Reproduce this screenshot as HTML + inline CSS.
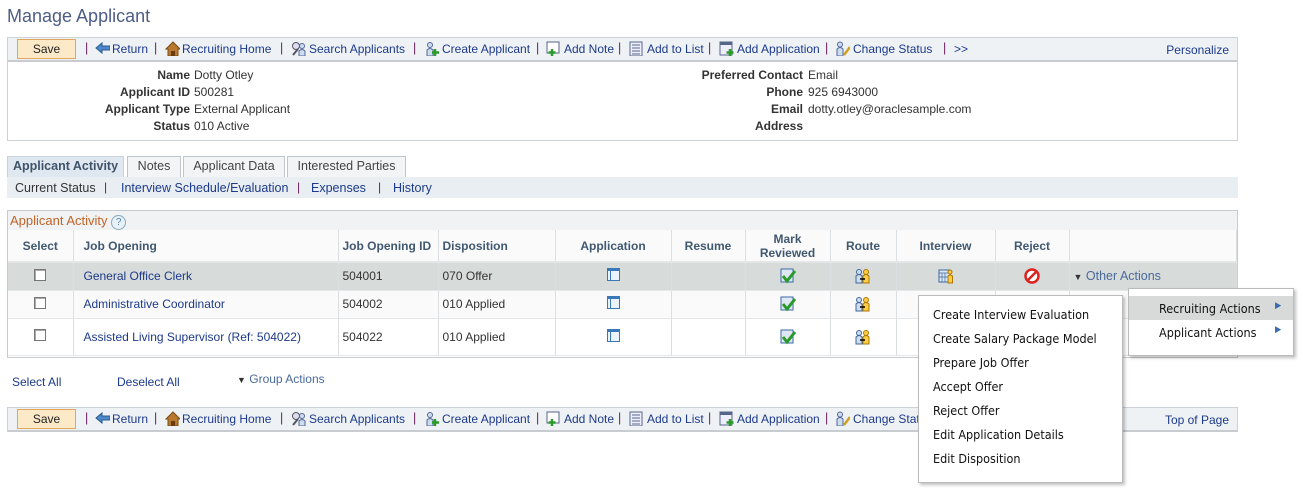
<!DOCTYPE html>
<html><head><meta charset="utf-8"><style>
*{box-sizing:border-box;margin:0;padding:0}
body{width:1303px;height:491px;background:#fff;font-family:"Liberation Sans",Arial,sans-serif;font-size:12px;color:#333;position:relative;overflow:hidden}
.a{position:absolute;white-space:nowrap}
.lnk{color:#1d3a8a}
.tb{position:absolute;left:7px;width:1231px;height:25px;background:#eef2f5;border:1px solid #ccd2d8;border-bottom:2px solid #c8ccd0}
.save{position:absolute;left:9px;top:1px;width:59px;height:20px;background:#fce9c8;border:1px solid #e3a45c;text-align:center;line-height:18px;color:#222}
.t{position:absolute;top:4px;font-size:12px;color:#1d3a8a;white-space:nowrap}
.s{position:absolute;top:3px;color:#6a2060;font-size:12.5px}
.ic{position:absolute;top:3px;width:15px;height:15px}
.lbl{position:absolute;font-weight:bold;text-align:right;color:#333}
.val{position:absolute;color:#333}
.tab{position:absolute;top:156px;height:21px;border:1px solid #bcc6cf;border-bottom:none;background:#f3f4f5;text-align:center;line-height:19px;color:#444;font-size:12.5px;white-space:nowrap}
.grid{position:absolute;left:7px;top:210px;width:1231px;height:148px;border:1px solid #c6cbcf}
table{position:absolute;left:0;top:19px;border-collapse:collapse;width:1229px;table-layout:fixed}
td,th{border-right:1px solid #dcdfe1;font-size:12px;white-space:nowrap}
th{height:32px;background:#fafafa;color:#405870;font-weight:bold;border-bottom:2px solid #e3e5e6}
td{color:#333;border-bottom:1px solid #e4e6e7}
.cb{display:inline-block;width:12px;height:12px;border:1px solid #777;background:#fff;box-shadow:inset 1px 1px 0 #aaa}
.app{display:inline-block;width:13px;height:13px;border:1px solid #3a78b8;border-top:3px solid #3a78b8;background:#eaf3fb;position:relative}
.app:after{content:"";position:absolute;left:2px;top:0;width:1px;height:9px;background:#3a78b8}
.menu{position:absolute;background:#fff;border:1px solid #bbb;box-shadow:2px 2px 3px rgba(0,0,0,.25);font-family:"DejaVu Sans Condensed","Liberation Sans",sans-serif;font-size:12.5px;color:#111}
.mi{position:absolute;left:14px;white-space:nowrap}
svg{display:inline-block;vertical-align:middle}
</style></head><body>
<div class="a" style="left:7px;top:6px;font-size:18px;color:#4d5d85">Manage Applicant</div>

<svg width="0" height="0" style="position:absolute"><defs>
<g id="ret"><path d="M1 7 L7 2 L7 5 L15 5 L15 9 L7 9 L7 12 Z" fill="#4d88c8" stroke="#2a5a98"/></g>
<g id="home"><path d="M1 8 L8 1 L15 8 L13 8 L13 15 L3 15 L3 8 Z" fill="#b8782e" stroke="#7a4a18"/><rect x="6" y="10" width="4" height="5" fill="#6a3a10"/></g>
<g id="srch"><circle cx="5" cy="5" r="3.5" fill="#dde" stroke="#556"/><path d="M7 8 L2 14" stroke="#556" stroke-width="2"/><circle cx="11" cy="5" r="2.5" fill="#cde" stroke="#569"/><path d="M8 15 L8 10 Q11 7 14 10 L14 15Z" fill="#cde" stroke="#569"/></g>
<g id="cre"><circle cx="6" cy="4" r="2.5" fill="#cde" stroke="#569"/><path d="M3 15 L3 9 Q6 6 9 9 L9 15Z" fill="#cde" stroke="#569"/><path d="M11 8 V15 M8 11.5 H15" stroke="#2a9a2a" stroke-width="2.5"/></g>
<g id="note"><rect x="1" y="1" width="12" height="11" fill="#fff" stroke="#568"/><path d="M6 8 V15 M2.5 11.5 H9.5" stroke="#2a9a2a" stroke-width="2.5"/></g>
<g id="list"><rect x="1" y="1" width="12" height="14" fill="#eef" stroke="#568"/><path d="M3 4H11M3 7H11M3 10H11M3 13H11" stroke="#568"/></g>
<g id="appl"><rect x="1" y="1" width="12" height="13" fill="#eef" stroke="#568"/><rect x="1" y="1" width="12" height="3" fill="#568"/><path d="M11 8 V15 M7.5 11.5 H14.5" stroke="#2a9a2a" stroke-width="2.5"/></g>
<g id="chg"><circle cx="5" cy="3.5" r="2.5" fill="#cde" stroke="#569"/><path d="M2 15 L2 8 Q5 5 8 8 L8 15Z" fill="#cde" stroke="#569"/><path d="M9 14 L15 6" stroke="#d0a020" stroke-width="2.5"/></g>
</defs></svg>

<div class="tb" style="top:37px">
 <div class="save">Save</div>
 <span class="s" style="left:77px">|</span><svg class="ic" style="left:87px"><use href="#ret"/></svg><span class="t" style="left:104px">Return</span>
 <span class="s" style="left:146px">|</span><svg class="ic" style="left:157px"><use href="#home"/></svg><span class="t" style="left:174px">Recruiting Home</span>
 <span class="s" style="left:272px">|</span><svg class="ic" style="left:283px"><use href="#srch"/></svg><span class="t" style="left:301px">Search Applicants</span>
 <span class="s" style="left:405px">|</span><svg class="ic" style="left:416px"><use href="#cre"/></svg><span class="t" style="left:434px">Create Applicant</span>
 <span class="s" style="left:528px">|</span><svg class="ic" style="left:538px"><use href="#note"/></svg><span class="t" style="left:556px">Add Note</span>
 <span class="s" style="left:610px">|</span><svg class="ic" style="left:621px"><use href="#list"/></svg><span class="t" style="left:639px">Add to List</span>
 <span class="s" style="left:700px">|</span><svg class="ic" style="left:711px"><use href="#appl"/></svg><span class="t" style="left:729px">Add Application</span>
 <span class="s" style="left:817px">|</span><svg class="ic" style="left:827px"><use href="#chg"/></svg><span class="t" style="left:845px">Change Status</span>
 <span class="s" style="left:935px">|</span><span class="t" style="left:946px">&gt;&gt;</span>
 <div class="t" style="right:8px;left:auto;top:5px">Personalize</div>
</div>

<div class="a" style="left:7px;top:61px;width:1231px;height:80px;border:1px solid #ccd2d8;border-top:none"></div>
<div class="lbl" style="left:40px;width:150px;top:68px">Name</div><div class="val" style="left:194px;top:68px">Dotty Otley</div>
<div class="lbl" style="left:40px;width:150px;top:85px">Applicant ID</div><div class="val" style="left:194px;top:85px">500281</div>
<div class="lbl" style="left:40px;width:150px;top:102px">Applicant Type</div><div class="val" style="left:194px;top:102px">External Applicant</div>
<div class="lbl" style="left:40px;width:150px;top:119px">Status</div><div class="val" style="left:194px;top:119px">010 Active</div>
<div class="lbl" style="left:600px;width:203px;top:68px">Preferred Contact</div><div class="val" style="left:808px;top:68px">Email</div>
<div class="lbl" style="left:600px;width:203px;top:85px">Phone</div><div class="val" style="left:808px;top:85px">925 6943000</div>
<div class="lbl" style="left:600px;width:203px;top:102px">Email</div><div class="val" style="left:808px;top:102px">dotty.otley@oraclesample.com</div>
<div class="lbl" style="left:600px;width:203px;top:119px">Address</div>

<div class="tab" style="left:7px;width:117px;background:#dfe8f0;color:#41536a;font-weight:bold;border-color:#c8d2da;height:22px">Applicant Activity</div>
<div class="tab" style="left:127px;width:54px">Notes</div>
<div class="tab" style="left:183px;width:102px">Applicant Data</div>
<div class="tab" style="left:287px;width:119px">Interested Parties</div>
<div class="a" style="left:7px;top:177px;width:1231px;height:21px;background:#e9eef2"></div>
<div class="a" style="left:15px;top:181px;font-size:12.5px;color:#333">Current Status</div>
<div class="a" style="left:104px;top:180px;color:#6a2060">|</div>
<div class="a lnk" style="left:121px;top:181px;font-size:12.5px">Interview Schedule/Evaluation</div>
<div class="a" style="left:297px;top:180px;color:#6a2060">|</div>
<div class="a lnk" style="left:311px;top:181px;font-size:12.5px">Expenses</div>
<div class="a" style="left:378px;top:180px;color:#6a2060">|</div>
<div class="a lnk" style="left:393px;top:181px;font-size:12.5px">History</div>

<div class="grid">
 <div class="a" style="left:0;top:0;width:1229px;height:19px;background:#f0f2f3"></div>
 <div class="a" style="left:2px;top:2px;font-size:13px;color:#c06428">Applicant Activity <span style="display:inline-block;width:15px;height:15px;border:1px solid #8ab;border-radius:50%;font-size:10px;text-align:center;line-height:13px;color:#58a;background:#e8f0f8">?</span></div>
 <table>
  <tr><th style="width:65px;text-align:center">Select</th><th style="width:265px;text-align:left;padding-left:10px">Job Opening</th><th style="width:100px;text-align:left;padding-left:4px">Job Opening ID</th><th style="width:117px;text-align:left;padding-left:4px">Disposition</th><th style="width:116px">Application</th><th style="width:74px">Resume</th><th style="width:85px">Mark<br>Reviewed</th><th style="width:66px">Route</th><th style="width:99px">Interview</th><th style="width:74px">Reject</th><th></th></tr>
  <tr style="height:28px;background:#d7dbda"><td align=center><span class="cb"></span></td><td style="padding-left:10px" class="lnk">General Office Clerk</td><td style="padding-left:4px">504001</td><td style="padding-left:4px">070 Offer</td><td align=center><span class="app"></span></td><td></td>
   <td align=center><svg width="16" height="16"><rect x="1" y="1" width="12" height="13" fill="#dfe8f2" stroke="#3a6aa8"/><path d="M3 8 L7 13 L15 3" stroke="#2a9a2a" stroke-width="3" fill="none"/></svg></td>
   <td align=center><svg width="16" height="16"><circle cx="4" cy="4" r="2.5" fill="#cde" stroke="#469"/><path d="M1 15V8Q4 5 7 8V15Z" fill="#cde" stroke="#469"/><circle cx="11" cy="4" r="2.5" fill="#fc4" stroke="#a70"/><path d="M8 15V8Q11 5 14 8V15Z" fill="#fc4" stroke="#a70"/><path d="M5 11H10" stroke="#000" stroke-width="1.5"/></svg></td>
   <td align=center><svg width="16" height="16"><rect x="1" y="2" width="11" height="12" fill="#dfe8f2" stroke="#3a6aa8"/><path d="M1 5H12M4 5V14M7 5V14M1 9H12" stroke="#3a6aa8" stroke-width=".7"/><circle cx="12" cy="4" r="2" fill="#fc4" stroke="#a70"/><path d="M10 15V8Q12 6 14.5 8V15Z" fill="#fc4" stroke="#a70"/></svg></td>
   <td align=center><svg width="16" height="16"><circle cx="8" cy="8" r="6.5" fill="#fff" stroke="#d22" stroke-width="2.5"/><path d="M4 12L12 4" stroke="#d22" stroke-width="2.5"/></svg></td>
   <td style="padding-left:4px;color:#4a6a9a;font-size:12.5px"><span style="font-size:9px;color:#333">▼</span> Other Actions</td></tr>
  <tr style="height:28px;background:#fafafa"><td align=center><span class="cb"></span></td><td style="padding-left:10px" class="lnk">Administrative Coordinator</td><td style="padding-left:4px">504002</td><td style="padding-left:4px">010 Applied</td><td align=center><span class="app"></span></td><td></td>
   <td align=center><svg width="16" height="16"><rect x="1" y="1" width="12" height="13" fill="#dfe8f2" stroke="#3a6aa8"/><path d="M3 8 L7 13 L15 3" stroke="#2a9a2a" stroke-width="3" fill="none"/></svg></td>
   <td align=center><svg width="16" height="16"><circle cx="4" cy="4" r="2.5" fill="#cde" stroke="#469"/><path d="M1 15V8Q4 5 7 8V15Z" fill="#cde" stroke="#469"/><circle cx="11" cy="4" r="2.5" fill="#fc4" stroke="#a70"/><path d="M8 15V8Q11 5 14 8V15Z" fill="#fc4" stroke="#a70"/><path d="M5 11H10" stroke="#000" stroke-width="1.5"/></svg></td><td></td><td></td><td></td></tr>
  <tr style="height:37px;background:#fff"><td align=center><span class="cb"></span></td><td style="padding-left:10px" class="lnk">Assisted Living Supervisor (Ref: 504022)</td><td style="padding-left:4px">504022</td><td style="padding-left:4px">010 Applied</td><td align=center><span class="app"></span></td><td></td>
   <td align=center><svg width="16" height="16"><rect x="1" y="1" width="12" height="13" fill="#dfe8f2" stroke="#3a6aa8"/><path d="M3 8 L7 13 L15 3" stroke="#2a9a2a" stroke-width="3" fill="none"/></svg></td>
   <td align=center><svg width="16" height="16"><circle cx="4" cy="4" r="2.5" fill="#cde" stroke="#469"/><path d="M1 15V8Q4 5 7 8V15Z" fill="#cde" stroke="#469"/><circle cx="11" cy="4" r="2.5" fill="#fc4" stroke="#a70"/><path d="M8 15V8Q11 5 14 8V15Z" fill="#fc4" stroke="#a70"/><path d="M5 11H10" stroke="#000" stroke-width="1.5"/></svg></td><td></td><td></td><td></td></tr>
 </table>
</div>

<div class="a lnk" style="left:12px;top:375px">Select All</div>
<div class="a lnk" style="left:117px;top:375px">Deselect All</div>
<div class="a" style="left:237px;top:372px;color:#4a6a9a"><span style="font-size:9px;color:#333">▼</span> Group Actions</div>

<div class="tb" style="top:407px">
 <div class="save">Save</div>
 <span class="s" style="left:77px">|</span><svg class="ic" style="left:87px"><use href="#ret"/></svg><span class="t" style="left:104px">Return</span>
 <span class="s" style="left:146px">|</span><svg class="ic" style="left:157px"><use href="#home"/></svg><span class="t" style="left:174px">Recruiting Home</span>
 <span class="s" style="left:272px">|</span><svg class="ic" style="left:283px"><use href="#srch"/></svg><span class="t" style="left:301px">Search Applicants</span>
 <span class="s" style="left:405px">|</span><svg class="ic" style="left:416px"><use href="#cre"/></svg><span class="t" style="left:434px">Create Applicant</span>
 <span class="s" style="left:528px">|</span><svg class="ic" style="left:538px"><use href="#note"/></svg><span class="t" style="left:556px">Add Note</span>
 <span class="s" style="left:610px">|</span><svg class="ic" style="left:621px"><use href="#list"/></svg><span class="t" style="left:639px">Add to List</span>
 <span class="s" style="left:700px">|</span><svg class="ic" style="left:711px"><use href="#appl"/></svg><span class="t" style="left:729px">Add Application</span>
 <span class="s" style="left:817px">|</span><svg class="ic" style="left:827px"><use href="#chg"/></svg><span class="t" style="left:845px">Change Status</span>
 <div class="t" style="right:8px;left:auto;top:5px">Top of Page</div>
</div>

<div class="menu" style="left:918px;top:295px;width:205px;height:188px">
 <div class="mi" style="top:11px">Create Interview Evaluation</div>
 <div class="mi" style="top:35px">Create Salary Package Model</div>
 <div class="mi" style="top:59px">Prepare Job Offer</div>
 <div class="mi" style="top:83px">Accept Offer</div>
 <div class="mi" style="top:107px">Reject Offer</div>
 <div class="mi" style="top:131px">Edit Application Details</div>
 <div class="mi" style="top:155px">Edit Disposition</div>
</div>
<div class="menu" style="left:1128px;top:288px;width:166px;height:68px">
 <div class="a" style="left:0;top:7px;width:164px;height:24px;background:#d8d9d9"></div>
 <div class="mi" style="left:30px;top:12px">Recruiting Actions</div><div class="a" style="left:146px;top:12px;font-size:9px;color:#3a6ab0">▶</div>
 <div class="mi" style="left:30px;top:36px">Applicant Actions</div><div class="a" style="left:146px;top:36px;font-size:9px;color:#3a6ab0">▶</div>
</div>
</body></html>
